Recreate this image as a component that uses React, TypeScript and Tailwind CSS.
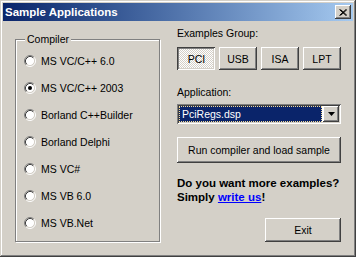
import React from "react";

const RAISED =
  "shadow-[inset_-1px_-1px_#404040,inset_1px_1px_#ffffff,inset_-2px_-2px_#808080,inset_2px_2px_#d4d0c8]";

function Radio({ checked }: { checked?: boolean }) {
  return (
    <svg width="12" height="12" viewBox="0 0 12 12" className="shrink-0">
      <circle cx="6" cy="6" r="4.5" fill="#ffffff" />
      <path d="M2.11 9.89 A5.5 5.5 0 0 1 9.89 2.11" fill="none" stroke="#808080" strokeWidth="1" />
      <path d="M9.89 2.11 A5.5 5.5 0 0 1 2.11 9.89" fill="none" stroke="#ffffff" strokeWidth="1" />
      <path d="M2.82 9.18 A4.5 4.5 0 0 1 9.18 2.82" fill="none" stroke="#404040" strokeWidth="1" />
      <path d="M9.18 2.82 A4.5 4.5 0 0 1 2.82 9.18" fill="none" stroke="#d4d0c8" strokeWidth="1" />
      {checked && <circle cx="6" cy="6" r="2" fill="#000000" />}
    </svg>
  );
}

const compilers = [
  "MS VC/C++ 6.0",
  "MS VC/C++ 2003",
  "Borland C++Builder",
  "Borland Delphi",
  "MS VC#",
  "MS VB 6.0",
  "MS VB.Net",
];

export default function App() {
  return (
    <div
      className="w-[356px] h-[257px] bg-[#d4d0c8] p-[3px] flex flex-col text-black text-[10.5px] leading-[14px] shadow-[inset_-1px_-1px_#404040,inset_1px_1px_#d4d0c8,inset_-2px_-2px_#808080,inset_2px_2px_#ffffff]"
      style={{ fontFamily: '"Liberation Sans", Arial, sans-serif' }}
    >
      {/* Title bar */}
      <div className="h-[18px] flex items-center justify-between bg-gradient-to-r from-[#0a246a] to-[#a6caf0] pl-[2px] pr-[2px]">
        <span className="text-white font-bold text-[11.5px] leading-[14px]">Sample Applications</span>
        <div className={`w-[16px] h-[14px] bg-[#d4d0c8] flex items-center justify-center ${RAISED}`}>
          <svg width="8" height="7" viewBox="0 0 8 7">
            <path d="M0.5 0.5 L7 6.5 M1.5 0.5 L8 6.5 M7 0.5 L0.5 6.5 M8 0.5 L1.5 6.5" stroke="#000" strokeWidth="1" fill="none" />
          </svg>
        </div>
      </div>

      {/* Body */}
      <div className="flex flex-1">
        {/* Left group */}
        <div className="ml-[12px] mt-[18px] w-[145px] h-[203px] relative border border-[#808080] shadow-[inset_1px_1px_#ffffff,1px_1px_#ffffff]">
          <span className="absolute top-[-8px] left-[9px] px-[2px] bg-[#d4d0c8]">Compiler</span>
          <div className="flex flex-col pt-[7px] pl-[8px]">
            {compilers.map((c, i) => (
              <div key={c} className="h-[27px] flex items-center gap-[5px]">
                <Radio checked={i === 1} />
                <span>{c}</span>
              </div>
            ))}
          </div>
        </div>

        {/* Right column */}
        <div className="ml-[17px] w-[164px] flex flex-col">
          <div className="mt-[5px]">Examples Group:</div>
          <div className="mt-[7px] flex justify-between">
            <div className="w-[38px] h-[23px] flex items-center justify-center bg-[repeating-conic-gradient(#ffffff_0_25%,#d4d0c8_0_50%)] bg-[length:2px_2px] shadow-[inset_1px_1px_#404040,inset_-1px_-1px_#ffffff,inset_2px_2px_#808080,inset_-2px_-2px_#d4d0c8]">
              <span className="pt-[1px] pl-[1px]">PCI</span>
            </div>
            {["USB", "ISA", "LPT"].map((t) => (
              <div key={t} className={`w-[38px] h-[23px] flex items-center justify-center bg-[#d4d0c8] ${RAISED}`}>
                {t}
              </div>
            ))}
          </div>
          <div className="mt-[15px]">Application:</div>
          <div className="mt-[5px] h-[20px] bg-white p-[2px] flex shadow-[inset_1px_1px_#808080,inset_-1px_-1px_#ffffff,inset_2px_2px_#404040,inset_-2px_-2px_#d4d0c8]">
            <div className="flex-1 bg-[#0a246a] border border-dotted border-[#f5db95] text-white flex items-center pl-[2px] mr-[1px]">
              PciRegs.dsp
            </div>
            <div className={`w-[16px] h-[16px] bg-[#d4d0c8] flex items-center justify-center ${RAISED}`}>
              <svg width="7" height="4" viewBox="0 0 7 4">
                <path d="M0 0 H7 L3.5 4 Z" fill="#000" />
              </svg>
            </div>
          </div>
          <div className={`mt-[13px] h-[26px] flex items-center justify-center bg-[#d4d0c8] ${RAISED}`}>
            Run compiler and load sample
          </div>
          <div className="mt-[13px] font-bold text-[11.5px] leading-[14px]">
            <div>Do you want more examples?</div>
            <div>
              Simply <span className="text-[#0000ff] underline">write us</span>!
            </div>
          </div>
          <div className="mt-[14px] flex justify-end">
            <div className={`w-[76px] h-[24px] flex items-center justify-center bg-[#d4d0c8] ${RAISED}`}>Exit</div>
          </div>
        </div>
      </div>
    </div>
  );
}
